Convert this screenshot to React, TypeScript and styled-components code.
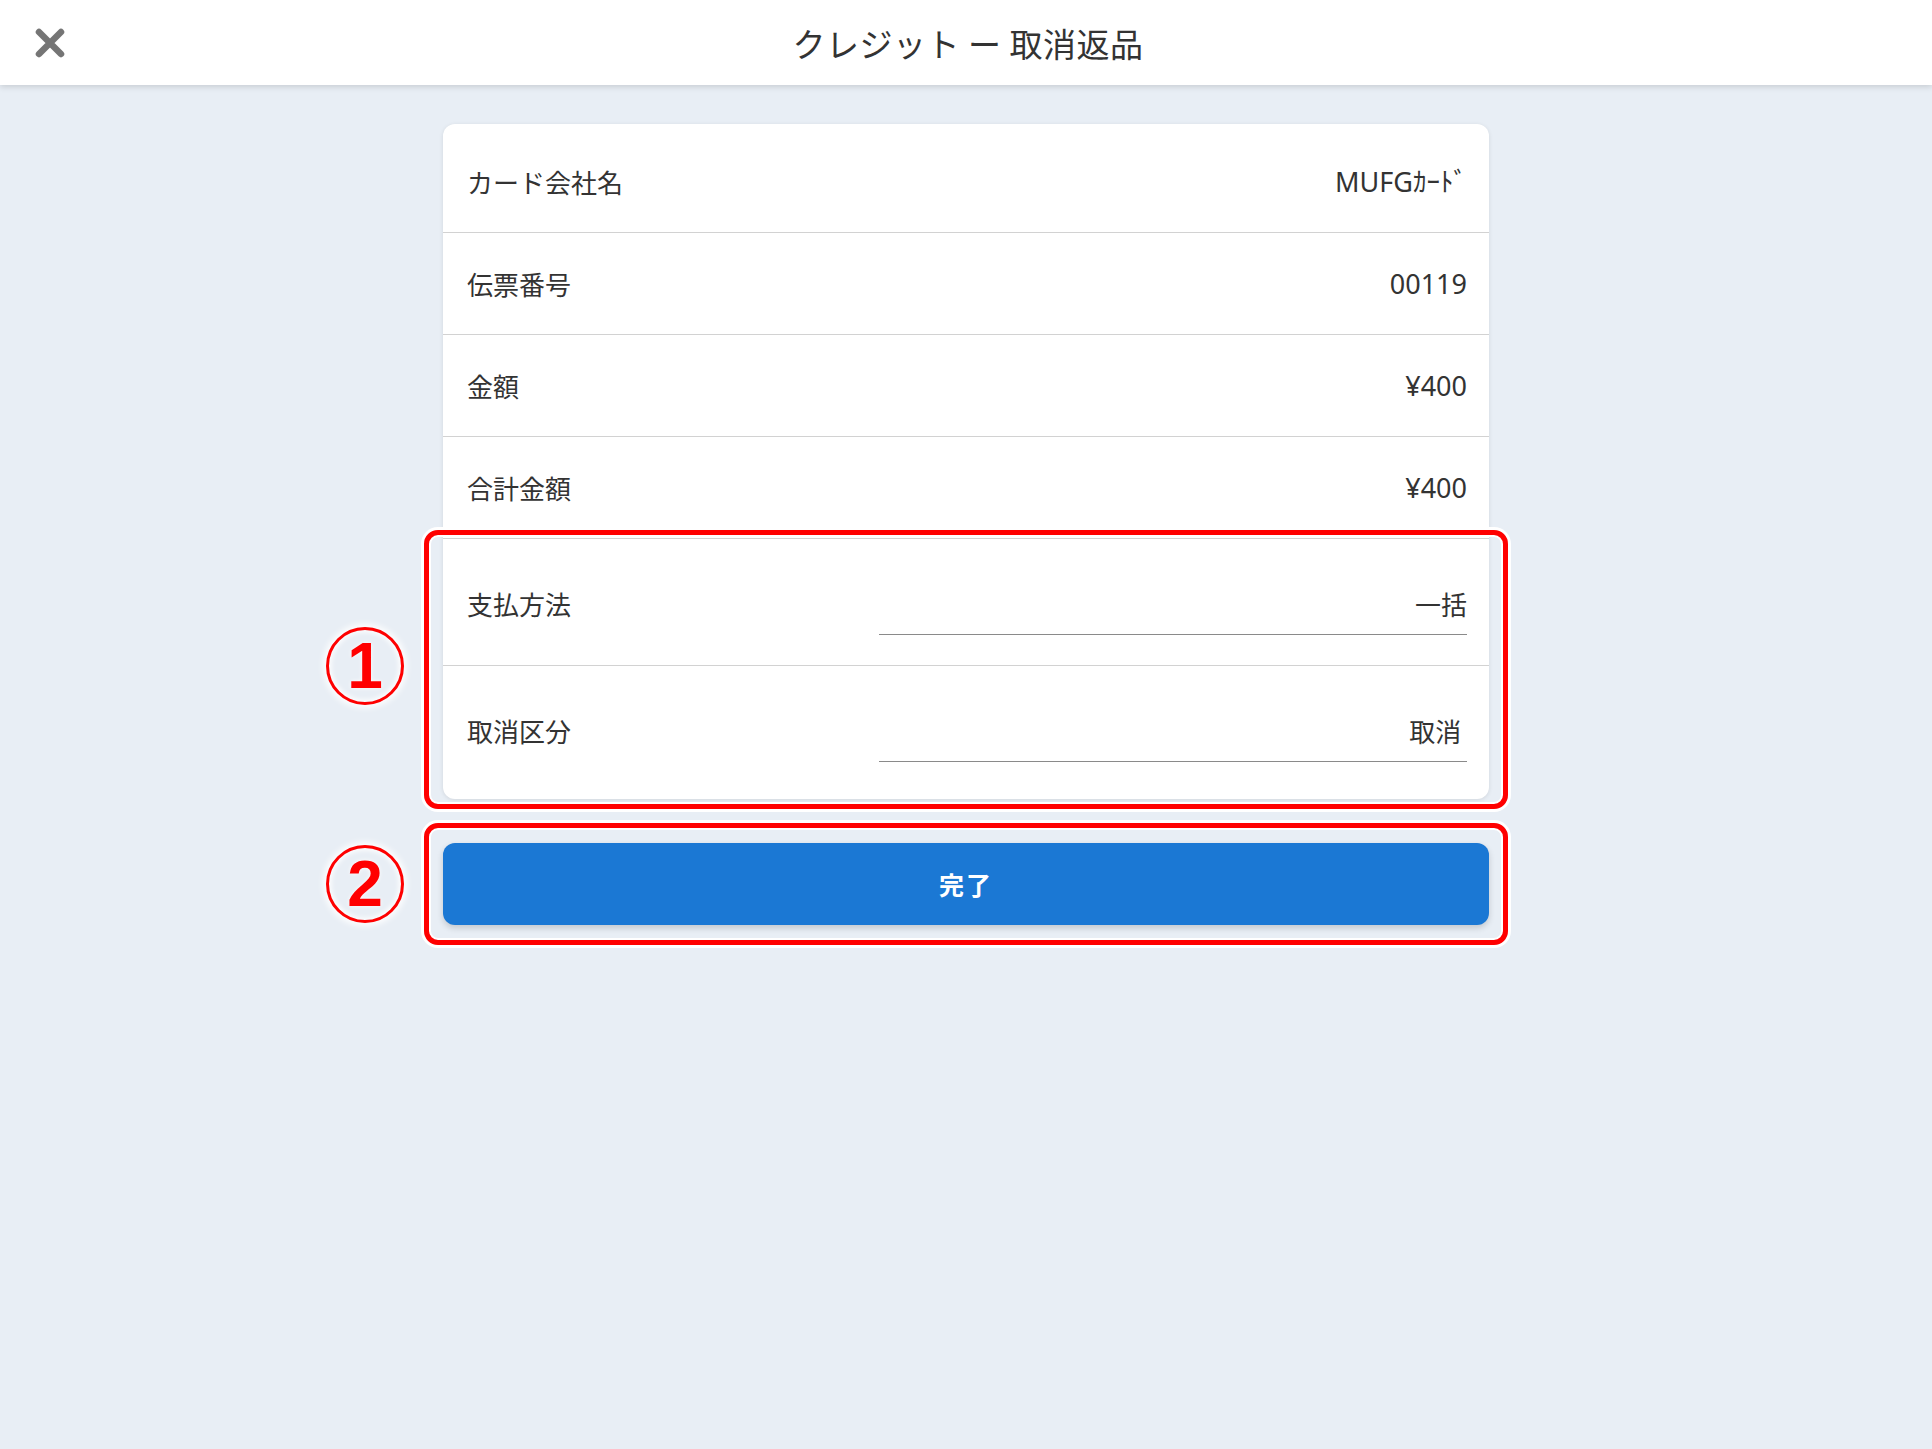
import { FC } from 'react'
import styled, { createGlobalStyle } from 'styled-components'

const GlobalStyle = createGlobalStyle`
  html, body {
    margin: 0;
    padding: 0;
  }

  body {
    background: #e8eef5;
    color: #333;
    font-family: 'Noto Sans', 'Noto Sans CJK JP', sans-serif;
    min-height: 1449px;
  }
`

const Header = styled.header`
  display: grid;
  grid-template-columns: 1fr auto 1fr;
  align-items: center;
  height: 85px;
  background: #fff;
  box-shadow: 0 2px 6px rgba(0, 0, 0, 0.14);
`

const CloseButton = styled.button`
  justify-self: start;
  display: flex;
  align-items: center;
  justify-content: center;
  margin-left: 33px;
  padding: 0;
  width: 34px;
  height: 34px;
  border: none;
  background: none;
  cursor: pointer;
`

const Title = styled.h1`
  margin: 0 0 0 4px;
  font-family: 'Noto Sans CJK JP', sans-serif;
  font-size: 33px;
  font-weight: 400;
  color: #333;
  letter-spacing: 0.5px;
`

const Main = styled.main`
  width: 1046px;
  margin: 39px auto 0;
`

const Card = styled.section`
  background: #fff;
  border-radius: 12px;
  padding: 7px 0 6px;
  box-shadow: 0 1px 4px rgba(0, 0, 0, 0.1);
`

const Row = styled.div`
  display: flex;
  align-items: center;
  justify-content: space-between;
  height: 101px;
  padding: 0 22px 0 24px;
  border-bottom: 1px solid #d2d2d2;
`

const FormRow = styled.div<{ $last?: boolean }>`
  display: flex;
  align-items: flex-start;
  justify-content: space-between;
  height: ${(props) => (props.$last ? '80px' : '79px')};
  padding: 47px 22px 0 24px;
  border-bottom: ${(props) => (props.$last ? 'none' : '1px solid #d2d2d2')};
`

const Label = styled.span`
  font-family: 'Noto Sans CJK JP', sans-serif;
  font-size: 26px;
  line-height: 36px;
  color: #333;
`

const Value = styled.span`
  font-family: 'Noto Sans', 'Noto Sans CJK JP', sans-serif;
  font-size: 27px;
  line-height: 36px;
  color: #333;
`

const Field = styled.div`
  width: 588px;
  height: 36px;
  padding-bottom: 12px;
  border-bottom: 1.5px solid #8a8a8a;
  text-align: right;
  font-family: 'Noto Sans CJK JP', sans-serif;
  font-size: 26px;
  line-height: 36px;
  color: #333;
`

const Highlight = styled.div`
  position: relative;
`

const Frame = styled.div<{ $top: number; $bottom: number }>`
  position: absolute;
  top: ${(props) => props.$top}px;
  bottom: ${(props) => props.$bottom}px;
  left: -19px;
  right: -19px;
  border: 5px solid #ff0000;
  border-radius: 14px;
  box-shadow: 0 0 0 3px #fff, inset 0 0 0 2px #fff;
  pointer-events: none;
`

const Badge = styled.span`
  position: absolute;
  left: -117px;
  top: 50%;
  transform: translateY(-50%);
  display: flex;
  align-items: center;
  justify-content: center;
  box-sizing: border-box;
  width: 78px;
  height: 78px;
  border: 3.5px solid #ff0000;
  border-radius: 50%;
  color: #ff0000;
  font-family: 'Liberation Sans', Arial, sans-serif;
  font-size: 64px;
  font-weight: 700;
  line-height: 1;
  box-shadow: 0 0 6px 3px rgba(255, 255, 255, 0.95),
    inset 0 0 5px 2px rgba(255, 255, 255, 0.95);
  text-shadow: 0 0 4px #fff;
`

const ButtonArea = styled.div`
  position: relative;
  margin-top: 44px;
`

const DoneButton = styled.button`
  display: block;
  width: 100%;
  height: 82px;
  border: none;
  border-radius: 12px;
  background: #1b78d4;
  color: #fff;
  font-family: 'Noto Sans CJK JP', sans-serif;
  font-size: 25px;
  font-weight: 700;
  letter-spacing: 2px;
  box-shadow: 0 3px 6px rgba(0, 0, 0, 0.16);
  cursor: pointer;
`

const details = [
  { label: 'カード会社名', value: 'MUFGｶｰﾄﾞ' },
  { label: '伝票番号', value: '00119' },
  { label: '金額', value: '¥400' },
  { label: '合計金額', value: '¥400' },
]

const CloseIcon: FC = () => (
  <svg width="32" height="32" viewBox="0 0 32 32" aria-hidden="true">
    <path
      d="M5 5 L27 27 M27 5 L5 27"
      stroke="#757575"
      strokeWidth="6.5"
      strokeLinecap="round"
    />
  </svg>
)

const App: FC = () => {
  return (
    <>
      <GlobalStyle />
      <Header>
        <CloseButton aria-label="閉じる">
          <CloseIcon />
        </CloseButton>
        <Title>クレジット ー 取消返品</Title>
        <div />
      </Header>

      <Main>
        <Card>
          {details.map((item) => (
            <Row key={item.label}>
              <Label>{item.label}</Label>
              <Value>{item.value}</Value>
            </Row>
          ))}

          <Highlight>
            <FormRow>
              <Label>支払方法</Label>
              <Field>一括</Field>
            </FormRow>
            <FormRow $last>
              <Label>取消区分</Label>
              <Field>取消&nbsp;</Field>
            </FormRow>
            <Frame $top={-9} $bottom={-16} />
            <Badge>1</Badge>
          </Highlight>
        </Card>

        <ButtonArea>
          <DoneButton>完了</DoneButton>
          <Frame $top={-20} $bottom={-20} />
          <Badge>2</Badge>
        </ButtonArea>
      </Main>
    </>
  )
}

export default App
